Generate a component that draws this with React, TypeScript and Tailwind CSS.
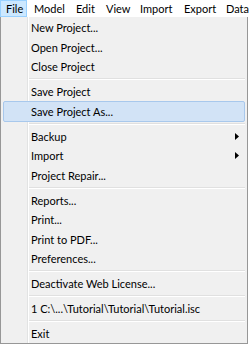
const FONT = { fontFamily: 'Lato, "Noto Sans", Arial, sans-serif' };

type Row = { kind: 'item'; label: string; sub?: boolean; active?: boolean } | { kind: 'sep' };

const ROWS: Row[] = [
  { kind: 'item', label: 'New Project...' },
  { kind: 'item', label: 'Open Project...' },
  { kind: 'item', label: 'Close Project' },
  { kind: 'sep' },
  { kind: 'item', label: 'Save Project' },
  { kind: 'item', label: 'Save Project As...', active: true },
  { kind: 'sep' },
  { kind: 'item', label: 'Backup', sub: true },
  { kind: 'item', label: 'Import', sub: true },
  { kind: 'item', label: 'Project Repair...' },
  { kind: 'sep' },
  { kind: 'item', label: 'Reports...' },
  { kind: 'item', label: 'Print...' },
  { kind: 'item', label: 'Print to PDF...' },
  { kind: 'item', label: 'Preferences...' },
  { kind: 'sep' },
  { kind: 'item', label: 'Deactivate Web License...' },
  { kind: 'sep' },
  { kind: 'item', label: '1 C:\\...\\Tutorial\\Tutorial\\Tutorial.isc' },
  { kind: 'sep' },
  { kind: 'item', label: 'Exit' },
];

function Arrow() {
  return (
    <svg width="4" height="7" viewBox="0 0 4 7" className="block">
      <path d="M0 0 L4 3.5 L0 7 Z" fill="#000" />
    </svg>
  );
}

export default function App() {
  return (
    <div className="w-[250px] h-[346px] bg-white overflow-hidden text-[11px] text-black" style={FONT}>
      {/* menu bar */}
      <div className="flex h-[17px] bg-white leading-none">
        <div className="flex items-center w-[27px] pl-[5px] border border-[#99d1ff] bg-[#cce8ff]">File</div>
        <div className="flex items-center w-[42px] pl-[7px]">Model</div>
        <div className="flex items-center w-[30px] pl-[7px]">Edit</div>
        <div className="flex items-center w-[34px] pl-[7px]">View</div>
        <div className="flex items-center w-[44px] pl-[7px]">Import</div>
        <div className="flex items-center w-[42px] pl-[7px]">Export</div>
        <div className="flex items-center w-[31px] pl-[7px]">Data</div>
      </div>

      {/* dropdown */}
      <div className="relative w-[248px] h-[327px] bg-[#f0f0f0] border-x border-b border-[#979797] pt-px">
        <div className="absolute left-[26px] top-0 bottom-0 w-px bg-[#e2e3e3]" />
        <div className="absolute left-[27px] top-0 bottom-0 w-px bg-white" />
        {ROWS.map((r, i) =>
          r.kind === 'sep' ? (
            <div key={i} className="flex flex-col justify-center h-[5.5px] pl-[27px] pr-[2px]">
              <div className="h-px bg-[#e0e0e0]" />
              <div className="h-px bg-white" />
            </div>
          ) : (
            <div key={i} className="relative h-[19.5px] flex items-center">
              {r.active && (
                <div className="absolute left-[2px] right-[2px] -top-px -bottom-px border border-[#a8c8ec] bg-[#d2e3f6] rounded-[2px]" />
              )}
              <span className="relative pl-[30px] leading-none whitespace-nowrap">{r.label}</span>
              {r.sub && (
                <span className="relative ml-auto mr-[8px]">
                  <Arrow />
                </span>
              )}
            </div>
          ),
        )}
      </div>
    </div>
  );
}
